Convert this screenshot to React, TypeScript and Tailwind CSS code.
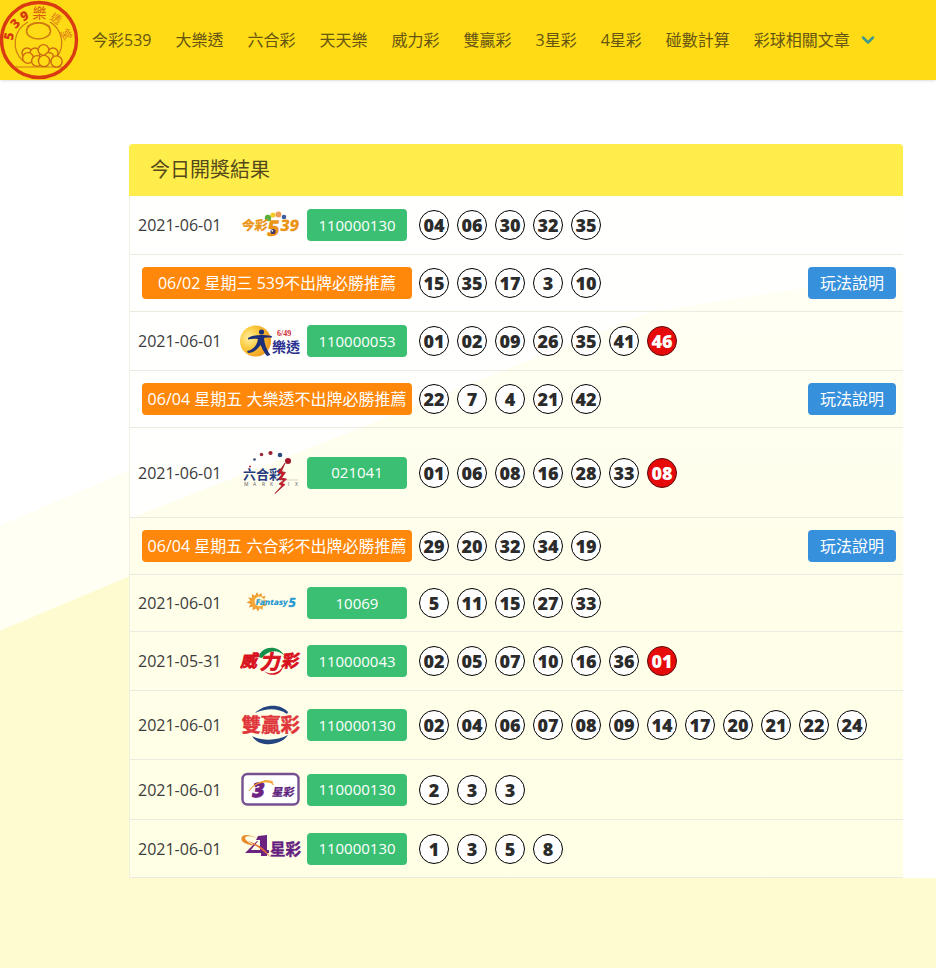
import type { ReactNode } from "react";
import { ChevronDown } from "lucide-react";

const cjk = "'Open Sans','Noto Sans CJK TC',sans-serif";

function SiteLogo() {
  return (
    <svg viewBox="0 0 80 80" className="h-20 w-20" fontFamily={cjk} textAnchor="middle" role="img" aria-label="539樂透堂">
      <circle cx="39" cy="40" r="37.5" fill="none" stroke="#d93a12" strokeWidth="3.4" />
      <g fill="#d8380f" fontWeight="800" fontSize="13">
        <text transform="translate(13.500 37) rotate(-80)">5</text>
        <text transform="translate(18.500 26.500) rotate(-48)">3</text>
        <text transform="translate(26.500 20) rotate(-26)">9</text>
      </g>
      <g fill="#dc7a16" fontSize="14">
        <text x="39.500" y="18" fill="#d75a12">樂</text>
        <text transform="translate(54 22) rotate(32)" fontSize="11">透</text>
        <text transform="translate(63 36) rotate(62)" fontSize="11">堂</text>
      </g>
      <g fill="none" stroke="#cf7a12" strokeWidth="1.2">
        <path d="M23 61A24 24 0 0 1 28 22M50 22A24 24 0 0 1 57 57" />
        <ellipse cx="38.500" cy="31" rx="12" ry="8" strokeWidth="1.600" />
        <path d="M27 27c5-6 18-6 23 0" />
        <path d="M14 67h48" />
        <g fill="#ffdb15" stroke="#cc6812" strokeWidth="1.400">
          <circle cx="27" cy="53" r="5" />
          <circle cx="35" cy="53" r="5" />
          <circle cx="43.500" cy="50" r="5.400" />
          <circle cx="53" cy="53" r="5" />
          <circle cx="28" cy="58" r="5.400" />
          <circle cx="49" cy="57" r="4.500" />
          <circle cx="37" cy="61" r="5.400" />
          <circle cx="44" cy="61" r="5.600" />
          <circle cx="56.500" cy="61.500" r="5.600" />
        </g>
      </g>
    </svg>
  );
}

function Logo539() {
  return (
    <svg viewBox="0 0 62 34" className="h-[34px] w-[62px]" fontFamily={cjk} fontWeight="800" fill="#eb9416">
      <circle cx="28" cy="10" r="3.200" fill="#5bae3c" />
      <circle cx="33" cy="7" r="2.600" fill="#f3cc25" />
      <circle cx="38.500" cy="6.500" r="2.900" fill="#ef9a56" />
      <circle cx="44" cy="9" r="2.300" fill="#3c5aa5" />
      <g transform="skewX(-8)">
        <text x="4" y="22" fontSize="13" fontWeight="700" stroke="#eb9416" strokeWidth=".3">今彩</text>
        <text x="30" y="28" fontSize="22">5</text>
        <text x="43" y="23" fontSize="16">39</text>
      </g>
      <circle cx="33" cy="23.500" r="2.600" fill="#47365f" />
      <circle cx="32.300" cy="22.800" r=".9" fill="#fff" />
    </svg>
  );
}

function LogoLotto() {
  return (
    <svg viewBox="0 0 62 34" className="h-[34px] w-[62px]" fontFamily={cjk} fontWeight="700">
      <defs>
        <radialGradient id="lotto-ball" cx=".3" cy=".4" r=".7">
          <stop offset="0" stopColor="#fff0a0" />
          <stop offset=".5" stopColor="#fbc93c" />
          <stop offset="1" stopColor="#f09a1c" />
        </radialGradient>
      </defs>
      <circle cx="15.500" cy="17" r="15.500" fill="url(#lotto-ball)" />
      <circle cx="21.500" cy="8" r="2.600" fill="#1c2f78" />
      <path d="M8 14c5-3 12-4 24-2l-.5 1.800c-4-.6-6-.4-7.500.2.500 5 2 11 6.500 17l-3.500 1C23 27 21.500 23 20.500 21 17 26 13 29 8 29l-1-2c7-1.500 10-6 11-12-3-.6-6-.4-10 .6z" fill="#1c2f78" />
      <text x="37" y="12" fontSize="8" fill="#d02a35" fontFamily="'Liberation Serif',serif">6/49</text>
      <text x="32" y="28" fontSize="14" fill="#2b318f">樂透</text>
    </svg>
  );
}

function LogoMarkSix() {
  return (
    <svg viewBox="0 0 62 65" className="h-[65px] w-[62px]" fontFamily={cjk} fontWeight="700">
      <circle cx="10" cy="26.500" r="1" fill="#b0202c" />
      <circle cx="14.500" cy="19.500" r="1.300" fill="#33476f" />
      <circle cx="21.500" cy="14.500" r="1.700" fill="#9c2130" />
      <circle cx="30.500" cy="13" r="2.100" fill="#9c2130" />
      <circle cx="40" cy="15" r="2.300" fill="#2b4c7e" />
      <circle cx="48" cy="21" r="3" fill="#a5152a" />
      <text x="3" y="38.500" fontSize="13" fill="#253a80">六合彩</text>
      <text y="46" fontSize="5" fill="#555" fontWeight="400">
        <tspan x="4">M</tspan><tspan x="13">A</tspan><tspan x="22">R</tspan><tspan x="30">K</tspan><tspan x="48">I</tspan><tspan x="55">X</tspan>
      </text>
      <path d="M39 40h19" stroke="#c3b3ae" strokeWidth=".6" />
      <path d="M45 23l-7 10 4 .5-3 6 5 .5-5 4 3 1.500-7 8 10-9-3-1 4.500-4.500-5-1 4-5.500-4-1z" fill="#cf1927" stroke="#9e1522" strokeWidth=".7" />
    </svg>
  );
}

function LogoFantasy() {
  return (
    <svg viewBox="0 0 62 32" className="h-8 w-[62px]" fontFamily={cjk}>
      <path d="M17 5l1.500 3 3-2 .3 3.500 3.700-.5-1.500 3.500 3.500 1.500-3.500 2 2.500 3-4-.3.200 4-3.200-2-1.500 4-2-3.600-3.300 2.300.1-3.800-4.100.8 2-3.300-4.200-1.500 4-2-2.500-3 4 .3-.2-3.800 3.200 2z" fill="#eb972c" />
      <circle cx="17.500" cy="15" r="7" fill="#f3a638" />
      <circle cx="19.500" cy="14.500" r="5" fill="#fff2c7" />
      <g transform="skewX(-9)" fill="#2b9bd2" fontWeight="800">
        <text x="18" y="18" fontSize="8">Fantasy</text>
        <text x="51" y="20" fontSize="13">5</text>
      </g>
    </svg>
  );
}

function LogoPower() {
  return (
    <svg viewBox="0 0 62 34" className="h-[34px] w-[62px]" fontFamily={cjk} fontWeight="700">
      <path d="M18 13C23 1 38 1 44 11 37 5 28 6 22 14z" fill="#138f4b" />
      <g transform="skewX(-12)" fill="#d8111d" stroke="#d8111d" strokeWidth=".8">
        <text x="5" y="23" fontSize="17">威</text>
        <text x="25" y="25" fontSize="20">力</text>
        <text x="46" y="23" fontSize="17">彩</text>
      </g>
      <path d="M24 27c6 4 15 3 19-5-1 9-12 12-19 5z" fill="#d8111d" />
    </svg>
  );
}

function LogoDouble() {
  return (
    <svg viewBox="0 0 62 44" className="h-11 w-[62px]" fontFamily={cjk} fontWeight="700">
      <path d="M15 10C24 1 40 0 48 9l-1 2C38 5 27 5 15 10z" fill="#23447f" />
      <path d="M12 33c10 5 25 5 36-1-7 11-29 13-36 1z" fill="#23447f" />
      <text x="1.500" y="28.500" fontSize="19.500" fill="#e0353a" stroke="#e0353a" strokeWidth=".4">雙贏彩</text>
    </svg>
  );
}

function LogoThree() {
  return (
    <svg viewBox="0 0 62 35" className="h-[35px] w-[62px]" fontFamily={cjk} fontWeight="800">
      <rect x="2.500" y="2" width="56" height="30.500" rx="5" fill="#fff" stroke="#765090" strokeWidth="2.400" />
      <g transform="skewX(-10)">
        <text x="16" y="25" fontSize="20" fill="#6e2382" stroke="#6e2382" strokeWidth="1">3</text>
        <text x="36" y="24" fontSize="11" fontWeight="700" fill="#5f1f7d" stroke="#5f1f7d" strokeWidth=".3">星彩</text>
      </g>
      <path d="M9 19c4-7 13-10 24-9-3-1-6-2-11-.5-6 2-10 5-13 9.500zM24 9c4-1 9 0 9 4 0-2-4-3-9-4z" fill="#f1a12d" stroke="#f1a12d" strokeWidth=".8" />
    </svg>
  );
}

function LogoFour() {
  return (
    <svg viewBox="0 0 62 33" className="h-[33px] w-[62px]" fontFamily={cjk}>
      <path d="M2 9C-1 2 8 1 17 6 8 3 3 4 6 8c3 3 7 5 11 6-7-.5-12-2-15-5z" fill="#e88b2b" />
      <path d="M18 4l9-1v15h2v3h-2v3h-6v-3H5l12-12h1l-7 9h9V8h-4z" fill="#6a247f" />
      <path d="M8 9c10 3 18 8 22 16C24 19 17 14 8 9z" fill="#e76e35" />
      <text x="30" y="23" fontSize="15.500" fontWeight="700" fill="#642080" stroke="#642080" strokeWidth=".4">星彩</text>
    </svg>
  );
}

type Draw = { date: string; logo: ReactNode; issue: string; balls: string[]; special?: string };
type Pick = { promo: string; balls: string[] };

const rows: (Draw | Pick)[] = [
  { date: "2021-06-01", logo: <Logo539 />, issue: "110000130", balls: ["04", "06", "30", "32", "35"] },
  { promo: "06/02 星期三 539不出牌必勝推薦", balls: ["15", "35", "17", "3", "10"] },
  { date: "2021-06-01", logo: <LogoLotto />, issue: "110000053", balls: ["01", "02", "09", "26", "35", "41"], special: "46" },
  { promo: "06/04 星期五 大樂透不出牌必勝推薦", balls: ["22", "7", "4", "21", "42"] },
  { date: "2021-06-01", logo: <LogoMarkSix />, issue: "021041", balls: ["01", "06", "08", "16", "28", "33"], special: "08" },
  { promo: "06/04 星期五 六合彩不出牌必勝推薦", balls: ["29", "20", "32", "34", "19"] },
  { date: "2021-06-01", logo: <LogoFantasy />, issue: "10069", balls: ["5", "11", "15", "27", "33"] },
  { date: "2021-05-31", logo: <LogoPower />, issue: "110000043", balls: ["02", "05", "07", "10", "16", "36"], special: "01" },
  { date: "2021-06-01", logo: <LogoDouble />, issue: "110000130", balls: ["02", "04", "06", "07", "08", "09", "14", "17", "20", "21", "22", "24"] },
  { date: "2021-06-01", logo: <LogoThree />, issue: "110000130", balls: ["2", "3", "3"] },
  { date: "2021-06-01", logo: <LogoFour />, issue: "110000130", balls: ["1", "3", "5", "8"] },
];

const links = ["今彩539", "大樂透", "六合彩", "天天樂", "威力彩", "雙贏彩", "3星彩", "4星彩", "碰數計算"];

function Balls({ balls, special }: { balls: string[]; special?: string }) {
  const base = "flex h-[30px] w-[30px] items-center justify-center rounded-full border text-lg leading-none font-extrabold";
  return (
    <div className="flex gap-2">
      {balls.map((n, i) => (
        <span key={i} className={`${base} border-black bg-white text-[#2b2b2b]`}>{n}</span>
      ))}
      {special && <span className={`${base} border-[#5c0a0a] bg-[#e60a0a] text-white`}>{special}</span>}
    </div>
  );
}

export default function App() {
  return (
    <div className="min-h-screen bg-[#fffbd0] font-['Open_Sans','Noto_Sans_CJK_TC',sans-serif] text-base text-[#3c3c3c]">
      <header className="relative flex h-20 items-center bg-[#ffdb15] shadow-sm">
        <a href="#" className="shrink-0">
          <SiteLogo />
        </a>
        <nav className="ml-3 flex items-center gap-6 whitespace-nowrap text-[#665412]">
          {links.map((l) => (
            <a key={l} href="#">{l}</a>
          ))}
          <a href="#" className="flex items-center gap-2">
            彩球相關文章
            <ChevronDown className="h-5 w-5 text-[#3f9a8e]" strokeWidth={3} />
          </a>
        </nav>
      </header>

      <main className="bg-white">
        <section className="relative mr-[33px] pt-16 pl-[129px]">
          {/* slanted backdrop behind the results panel */}
          <svg viewBox="0 0 129 797" preserveAspectRatio="none" className="absolute inset-y-0 left-0 h-full w-[129px]" aria-hidden="true">
            <path d="M0 445L129 390V797H0z" fill="#fffff3" />
            <path d="M0 550L129 496V797H0z" fill="#fffbd0" />
          </svg>

          <div className="relative">
            <h2 className="rounded-t bg-[#feed4a] px-[21px] py-3 text-xl text-[#54491a]">今日開獎結果</h2>
            <div className="relative border-l border-[#efefe2]">
              <svg viewBox="0 0 774 681" preserveAspectRatio="none" className="absolute inset-0 h-full w-full" aria-hidden="true">
                <defs>
                  <linearGradient id="panel-tint" x1="0" y1="0" x2="0" y2="1">
                    <stop offset="0" stopColor="#fffff5" />
                    <stop offset=".5" stopColor="#fffeea" />
                    <stop offset="1" stopColor="#ffffe5" />
                  </linearGradient>
                </defs>
                <path d="M0 0H774V681H0z" fill="#fffffe" />
                <path d="M0 322L230 232L520 116L774 76V681H0z" fill="url(#panel-tint)" />
              </svg>
              <table className="relative w-full table-fixed">
                <colgroup>
                  <col className="w-[110px]" />
                  <col className="w-[67px]" />
                  <col className="w-[112px]" />
                  <col />
                </colgroup>
                <tbody>
                  {rows.map((row, i) =>
                    "promo" in row ? (
                      <tr key={i} className="border-b border-[#ebebdf]">
                        <td colSpan={3} className="py-3 pl-3">
                          <a href="#" className="flex h-8 w-[270px] items-center justify-center rounded-sm bg-[#ff880a] whitespace-nowrap text-white">
                            {row.promo}
                          </a>
                        </td>
                        <td>
                          <div className="flex items-center justify-between pr-[7px]">
                            <Balls balls={row.balls} />
                            <button type="button" className="h-8 rounded-sm bg-[#3690dc] px-3 text-white">玩法說明</button>
                          </div>
                        </td>
                      </tr>
                    ) : (
                      <tr key={i} className="border-b border-[#ebebdf]">
                        <td className="pl-2 whitespace-nowrap">{row.date}</td>
                        <td className="py-3 [&>svg]:block">{row.logo}</td>
                        <td>
                          <a href="#" className="flex h-8 w-[100px] items-center justify-center rounded-sm bg-[#3bbf73] text-[15px] text-white">
                            {row.issue}
                          </a>
                        </td>
                        <td>
                          <Balls balls={row.balls} special={row.special} />
                        </td>
                      </tr>
                    )
                  )}
                </tbody>
              </table>
            </div>
          </div>
        </section>
      </main>
    </div>
  );
}
